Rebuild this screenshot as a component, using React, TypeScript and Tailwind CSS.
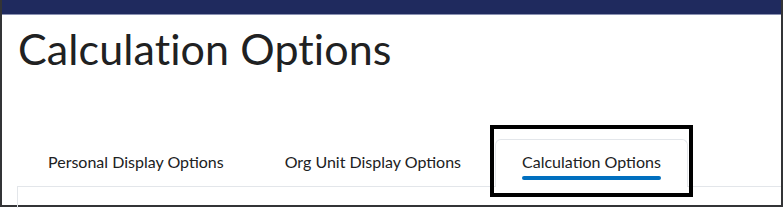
const tabs = [
  { label: "Personal Display Options", active: false },
  { label: "Org Unit Display Options", active: false },
  { label: "Calculation Options", active: true },
];

export default function App() {
  return (
    <div
      className="relative h-[208px] w-[784px] overflow-hidden bg-white"
      style={{ fontFamily: "Lato, 'Open Sans', sans-serif" }}
    >
      <div className="flex h-[207px] w-[783px] flex-col border-x-2 border-b-2 border-[#333436]">
        <div className="h-[15px] shrink-0 border-b border-[#8a91b2] bg-[#1f2a5e]" />

        <h1 className="mt-[9px] pl-[16px] text-[43px] leading-[50px] font-normal tracking-[0.1px] text-[#202122]">
          Calculation Options
        </h1>

        <div className="mt-[65px] pl-[15px]">
          <div className="flex gap-[7px] pl-[4px]">
            {tabs.map((tab) => (
              <div
                key={tab.label}
                className={
                  tab.active
                    ? "relative z-10 -mb-px h-[48px] rounded-t-md border border-b-0 border-[#e3e6ea] bg-white px-[26px] pt-[10px]"
                    : "h-[47px] px-[27px] pt-[11px]"
                }
              >
                <div className="inline-flex flex-col">
                  <span className="text-[16px] leading-[19px] text-[#202122]">
                    {tab.label}
                  </span>
                  {tab.active && (
                    <span className="mt-[5px] h-[4px] rounded-full bg-[#006fbf]" />
                  )}
                </div>
              </div>
            ))}
          </div>
          <div className="h-[30px] border-t border-l border-[#e3e6ea]" />
        </div>
      </div>

      <div className="absolute top-[125px] left-[490px] h-[72px] w-[203px] border-4 border-black" />
    </div>
  );
}
